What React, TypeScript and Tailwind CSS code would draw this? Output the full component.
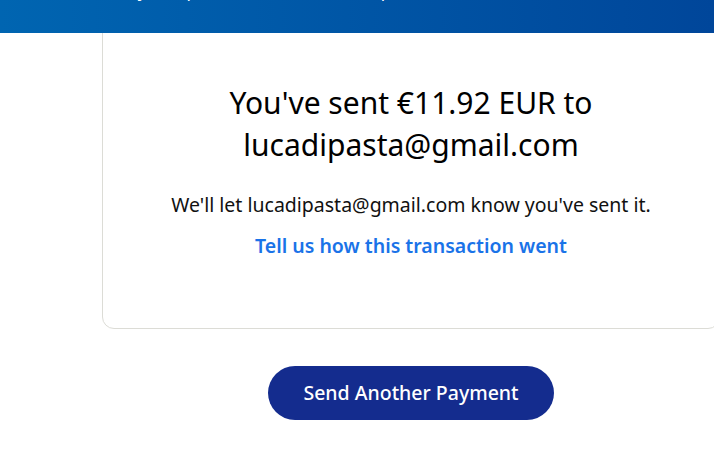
import React from 'react';

const font = { fontFamily: '"Noto Sans", "Liberation Sans", sans-serif' };

export default function App() {
  return (
    <div className="w-[714px] h-[476px] overflow-hidden bg-white" style={font}>
      <header className="relative z-10 h-[33px] overflow-hidden bg-gradient-to-r from-[#0065b1] to-[#00469a]">
        <p className="-mt-[21px] pl-[66px] text-[17px] leading-[24px] text-white whitespace-nowrap">
          Once they accept it, we will send a receipt to the email address on file.
        </p>
      </header>

      <main className="ml-[102px] w-[618px]">
        <section className="relative -mt-[14px] h-[310px] rounded-[12px] border border-[#dcdcd6] bg-white pt-[62px] text-center">
          <h1 className="text-[30px] leading-[42px] text-[#000000]">
            You've sent €11.92 EUR to
            <br />
            lucadipasta@gmail.com
          </h1>
          <p className="mt-[25px] text-[19.5px] leading-[28px] text-[#111111]">
            We'll let lucadipasta@gmail.com know you've sent it.
          </p>
          <a className="mt-[13px] inline-block text-[19.5px] font-semibold leading-[28px] text-[#1a73e8]" href="#">
            Tell us how this transaction went
          </a>
        </section>

        <div className="mt-[37px] flex justify-center">
          <button className="h-[54px] w-[286px] rounded-full bg-[#142c8e] text-[19.5px] font-medium text-white">
            Send Another Payment
          </button>
        </div>
      </main>
    </div>
  );
}
